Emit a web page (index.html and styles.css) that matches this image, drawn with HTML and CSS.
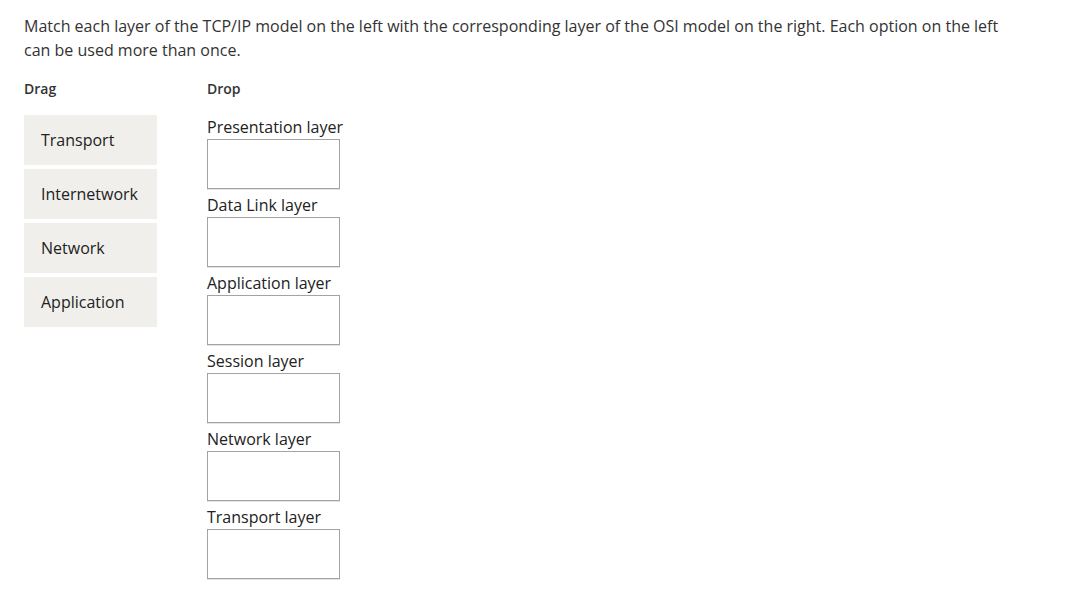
FILE: index.html
```html
<!DOCTYPE html>
<html>
<head>
<meta charset="utf-8">
<link rel="stylesheet" href="styles.css">
</head>
<body>
<div class="page">
  <p class="prompt">Match each layer of the TCP/IP model on the left with the corresponding layer of the OSI model on the right. Each option on the left can be used more than once.</p>
  <div class="dnd">
    <div class="col drag-col">
      <div class="heading">Drag</div>
      <div class="drag-list">
        <div class="drag-item">Transport</div>
        <div class="drag-item">Internetwork</div>
        <div class="drag-item">Network</div>
        <div class="drag-item">Application</div>
      </div>
    </div>
    <div class="col drop-col">
      <div class="heading">Drop</div>
      <div class="drop-list">
        <div class="drop-item"><div class="drop-label">Presentation layer</div><div class="drop-box"></div></div>
        <div class="drop-item"><div class="drop-label">Data Link layer</div><div class="drop-box"></div></div>
        <div class="drop-item"><div class="drop-label">Application layer</div><div class="drop-box"></div></div>
        <div class="drop-item"><div class="drop-label">Session layer</div><div class="drop-box"></div></div>
        <div class="drop-item"><div class="drop-label">Network layer</div><div class="drop-box"></div></div>
        <div class="drop-item"><div class="drop-label">Transport layer</div><div class="drop-box"></div></div>
      </div>
    </div>
  </div>
</div>
</body>
</html>
```
FILE: styles.css
```css
html, body {
  margin: 0;
  padding: 0;
  background: #ffffff;
}
body {
  font-family: "Open Sans", "Liberation Sans", sans-serif;
  color: #333333;
}
.page {
  padding: 14px 24px 0 24px;
}
.prompt {
  margin: 0;
  font-size: 16px;
  line-height: 24px;
  max-width: 1000px;
}
.dnd {
  display: flex;
  gap: 50px;
  margin-top: 18px;
}
.col {
  width: 133px;
}
.heading {
  font-size: 14px;
  font-weight: 600;
  line-height: 18px;
  margin-bottom: 17px;
}
.drag-list {
  display: flex;
  flex-direction: column;
  gap: 4px;
}
.drag-item {
  height: 50px;
  background: #f0efeb;
  display: flex;
  align-items: center;
  padding-left: 17px;
  font-size: 16px;
  color: #222;
}
.drop-list {
  display: flex;
  flex-direction: column;
}
.drop-item {
  margin-bottom: 4px;
}
.drop-label {
  font-size: 16px;
  line-height: 24px;
  white-space: nowrap;
  color: #222;
}
.drop-box {
  box-sizing: border-box;
  width: 133px;
  height: 50px;
  border: 1px solid #a3a3a3;
  box-shadow: 0 1px 0 #e4e4e4;
  background: #fff;
}
```
